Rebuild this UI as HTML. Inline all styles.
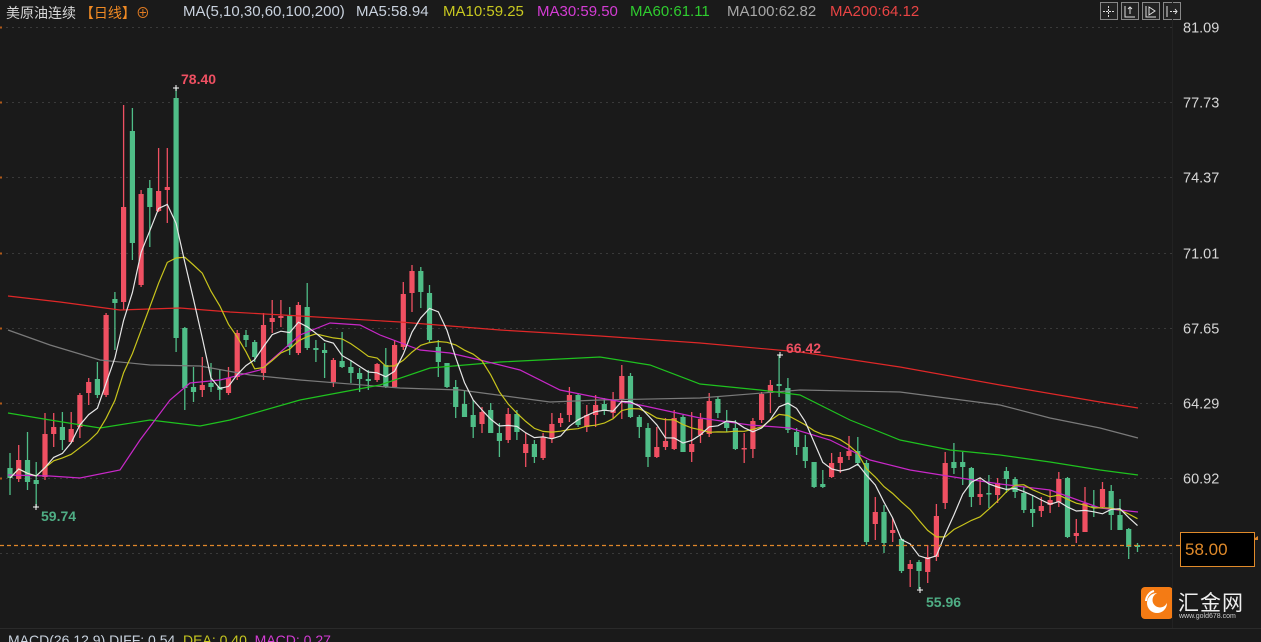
<!DOCTYPE html>
<html><head><meta charset="utf-8"><style>
html,body{margin:0;padding:0;background:#1a1a1a;width:1261px;height:642px;overflow:hidden;font-family:"Liberation Sans","Noto Sans CJK SC",sans-serif}
#w{position:relative;width:1261px;height:642px}
.t{position:absolute;white-space:nowrap}
</style></head><body><div id="w">
<svg id="s" width="1261" height="642" style="position:absolute;left:0;top:0"></svg>
<div class="t" style="left:6px;top:3px;font-size:14px;color:#d8d8d8">美原油连续 <span style="color:#f08a24">【日线】</span><span style="color:#e07b22">⊕</span></div>
<div class="t" style="left:183px;top:3px;font-size:15px;color:#c9d2de">MA(5,10,30,60,100,200)</div>
<div class="t" style="left:356px;top:3px;font-size:15px;color:#c9d2de">MA5:58.94</div>
<div class="t" style="left:443px;top:3px;font-size:15px;color:#c8c820">MA10:59.25</div>
<div class="t" style="left:537px;top:3px;font-size:15px;color:#d43cd4">MA30:59.50</div>
<div class="t" style="left:630px;top:3px;font-size:15px;color:#2fcc2f">MA60:61.11</div>
<div class="t" style="left:727px;top:3px;font-size:15px;color:#a8a8a8">MA100:62.82</div>
<div class="t" style="left:830px;top:3px;font-size:15px;color:#e84444">MA200:64.12</div>
<div class="t" style="left:1178px;top:587px;font-size:21px;color:#eee;letter-spacing:1px">汇金网</div>
<div class="t" style="left:1179px;top:613px;font-size:7px;color:#ccc">www.gold678.com</div>
<div class="t" style="left:8px;top:632px;font-size:14px;color:#c9d2de">MACD(26,12,9) DIFF: 0.54 <span style="color:#c8c820">&nbsp;DEA: 0.40</span> <span style="color:#d43cd4">&nbsp;MACD: 0.27</span></div>
<div class="t" style="left:1180px;top:532px;border:1px solid #e08a2a;background:#000;color:#e08a2a;font-size:17px;line-height:33px;padding-left:4px;box-sizing:border-box;width:75px;height:35px">58.00</div>
</div>
<script>
var s=document.getElementById('s'),h='';
function y(p){return 27+(81.09-p)*22.38;}
[81.09,77.73,74.37,71.01,67.65,64.29,60.92].forEach(function(p){var yy=Math.round(y(p))+0.5;
h+='<line x1="0" y1="'+yy+'" x2="1172" y2="'+yy+'" stroke="#3a3a3a" stroke-dasharray="2,4"/>';
h+='<text x="1183" y="'+(yy+5)+'" fill="#d6d6d6" font-size="14.5" font-family="Liberation Sans">'+p.toFixed(2)+'</text>';
h+='<rect x="0" y="'+(yy-1)+'" width="2" height="2" fill="#b05a1a"/>';});
h+='<line x1="0" y1="553.5" x2="1172" y2="553.5" stroke="#3a3a3a" stroke-dasharray="2,4"/>';
h+='<line x1="0" y1="628.5" x2="1261" y2="628.5" stroke="#2a2a2a"/>';
[1100,1121,1142,1163].forEach(function(x){h+='<rect x="'+(x+.5)+'" y="2.5" width="17" height="17" fill="#222" stroke="#888"/>';});
h+='<path d="M1108.5 6v11M1103 11.5h11" stroke="#ddd" stroke-dasharray="2,1"/><path d="M1125 6v11h10M1130 7v7M1128 9l2-2 2 2" stroke="#ddd" fill="none"/><path d="M1146 6v11h10M1149 7l6 4-6 4z" stroke="#ddd" fill="none"/><path d="M1167 6v11M1170 11.5h7M1175 9l2 2.5-2 2.5" stroke="#ddd" fill="none"/>';
var D=[
['g',468,478,453,495],['r',460,479,445,482],['g',460,482,432,490],['g',480,484,462,507],['r',434,477,413,480],['r',427,434,413,447],['g',427,440,412,450],['r',429,442,412,443],['r',395,427,393,438],['r',382,393,378,405],
['g',379,395,362,398],['r',315,395,313,397],['g',299,303,292,350],['r',207,302,105,310],['g',131,243,108,260],['r',194,285,190,287],['g',188,207,180,247],['r',191,211,148,212],['r',187,190,148,223],['g',98,338,88,352],
['g',328,388,327,410],['g',387,392,367,402],['r',385,390,357,397],['g',383,387,363,392],['g',387,390,370,400],['r',378,393,367,395],['r',333,377,330,380],['g',335,340,330,347],['g',342,357,340,362],['r',325,373,313,380],
['r',318,322,300,333],['r',316,318,300,327],['g',315,347,307,355],['r',305,353,302,355],['g',307,348,283,350],['g',348,350,340,362],['g',350,353,343,378],['r',360,382,358,387],['g',361,367,332,368],['g',367,373,360,383],
['g',373,379,368,392],['g',379,381,370,390],['r',364,380,363,382],['g',365,387,348,388],['r',345,387,340,388],['r',294,347,282,350],['r',271,293,265,312],['g',271,292,267,308],['g',293,340,285,343],['g',347,362,340,377],
['g',363,387,363,388],['g',387,407,380,418],['g',404,417,390,417],['g',415,427,400,438],['r',412,424,407,433],['g',410,433,403,433],['g',433,441,423,457],['r',414,440,408,443],['g',414,432,410,440],['r',444,453,433,467],
['g',444,457,440,463],['r',437,458,433,460],['r',424,438,413,443],['r',418,423,413,427],['r',395,415,387,422],['g',395,425,393,427],['r',415,427,405,432],['r',405,415,395,427],['g',404,411,398,415],['r',400,413,392,418],
['r',376,400,365,419],['g',376,417,373,418],['g',417,427,415,438],['g',428,457,423,467],['r',447,457,427,458],['r',441,447,418,450],['r',418,449,410,450],['g',417,452,415,452],['r',444,452,412,462],['r',419,435,413,443],
['r',401,434,393,437],['g',399,413,397,418],['g',421,428,410,432],['g',428,449,420,450],['r',448,449,433,463],['r',421,449,418,458],['r',394,420,392,423],['r',385,393,380,413],['g',384,386,355,397],['g',388,430,378,433],
['g',432,447,428,455],['g',447,461,435,468],['g',462,487,462,488],['g',484,487,470,488],['r',463,477,453,478],['r',457,463,452,473],['r',451,456,436,460],['g',451,463,437,466],['g',463,542,460,545],['r',512,524,497,540],
['g',512,543,505,553],['r',530,533,518,542],['g',539,571,538,573],['r',564,569,560,587],['g',562,571,560,589],['r',557,572,545,583],['r',516,557,504,561],['r',463,503,452,509],['g',462,468,443,474],['g',462,467,452,485],
['g',468,497,467,507],['r',494,497,478,505],['g',493,494,475,508],['r',483,495,478,503],['g',471,479,467,493],['g',479,492,477,498],['g',493,510,487,513],['g',509,513,495,527],['r',506,511,497,517],['r',500,505,490,513],
['r',479,502,472,507],['g',478,537,477,538],['r',533,536,519,543],['r',503,532,487,532],['g',506,507,490,517],['r',489,507,482,508],['g',491,515,485,530],['g',515,530,499,530],['g',529,547,528,559],['g',545,547,543,552]];
var closes=[];
D.forEach(function(d,i){var x=10+8.74*i,c=d[0]=='r'?'#ef5062':'#4fbd87';
closes.push(d[0]=='r'?d[1]:d[2]);
h+='<line x1="'+x.toFixed(1)+'" y1="'+d[3]+'" x2="'+x.toFixed(1)+'" y2="'+d[4]+'" stroke="'+c+'" stroke-width="1.3"/>';
h+='<rect x="'+(x-2.6).toFixed(1)+'" y="'+d[1]+'" width="5.2" height="'+Math.max(1.5,d[2]-d[1])+'" fill="'+c+'"/>';});
function pl(pts,c){h+='<polyline fill="none" stroke="'+c+'" stroke-width="1.2" points="'+pts.map(function(p){return p.join(',')}).join(' ')+'"/>';}
pl([[8,296],[60,302],[120,310],[180,308],[230,312],[300,316],[400,322],[500,330],[600,336],[700,343],[800,352],[900,367],[1000,385],[1100,402],[1138,408]],'#e02828');
pl([[8,330],[50,345],[100,360],[150,365],[200,366],[250,375],[300,380],[400,388],[460,390],[550,402],[600,400],[700,398],[800,390],[900,392],[1000,405],[1050,418],[1100,428],[1138,438]],'#7a7a7a');
pl([[8,413],[50,420],[100,428],[150,420],[200,426],[230,420],[300,400],[380,385],[430,368],[500,362],[600,357],[650,365],[700,384],[760,390],[800,395],[850,420],[900,440],[950,450],[1000,455],[1050,462],[1100,470],[1138,475]],'#1fc21f');
pl([[8,475],[50,476],[80,478],[120,470],[140,440],[170,400],[190,383],[220,380],[260,370],[300,335],[330,323],[360,325],[380,335],[420,350],[450,353],[480,360],[520,370],[560,390],[600,398],[640,405],[700,418],[750,425],[790,428],[830,440],[870,460],[910,470],[960,478],[1000,484],[1050,490],[1100,508],[1138,512]],'#c828c8');
function ma(n,c){var p=[];for(var i=0;i<closes.length;i++){var a=0,k=0;for(var j=Math.max(0,i-n+1);j<=i;j++){a+=closes[j];k++;}p.push([(10+8.74*i).toFixed(1),(a/k).toFixed(1)]);}pl(p,c);}
ma(10,'#c8c41c');ma(5,'#e6e6e6');
function mk(x,yy){h+='<path d="M'+(x-3)+' '+yy+'h6M'+x+' '+(yy-3)+'v6" stroke="#fff"/>';}
mk(176,88);mk(36,507);mk(780,355);mk(920,590);
h+='<text x="181" y="84" fill="#ef5062" font-size="14" font-weight="bold" font-family="Liberation Sans">78.40</text>';
h+='<text x="41" y="521" fill="#4fae85" font-size="14" font-weight="bold" font-family="Liberation Sans">59.74</text>';
h+='<text x="786" y="353" fill="#ef5062" font-size="14" font-weight="bold" font-family="Liberation Sans">66.42</text>';
h+='<text x="926" y="607" fill="#4fae85" font-size="14" font-weight="bold" font-family="Liberation Sans">55.96</text>';
h+='<line x1="0" y1="545.5" x2="1180" y2="545.5" stroke="#e0862a" stroke-width="1.3" stroke-dasharray="4,3"/>';
h+='<path d="M1252 540l6-4v4z" fill="#e0862a"/>';
h+='<rect x="1141" y="587" width="32" height="32" rx="4" fill="#f47b14"/><circle cx="1157" cy="603" r="10" fill="#fff"/><circle cx="1160" cy="600" r="7.5" fill="#f47b14"/><path d="M1146 601a11 11 0 0 1 8-10" stroke="#fff" stroke-width="2" fill="none"/>';
h+='<rect x="1172" y="0" width="1" height="628" fill="#222"/>';
s.innerHTML=h;
</script>
</body></html>
